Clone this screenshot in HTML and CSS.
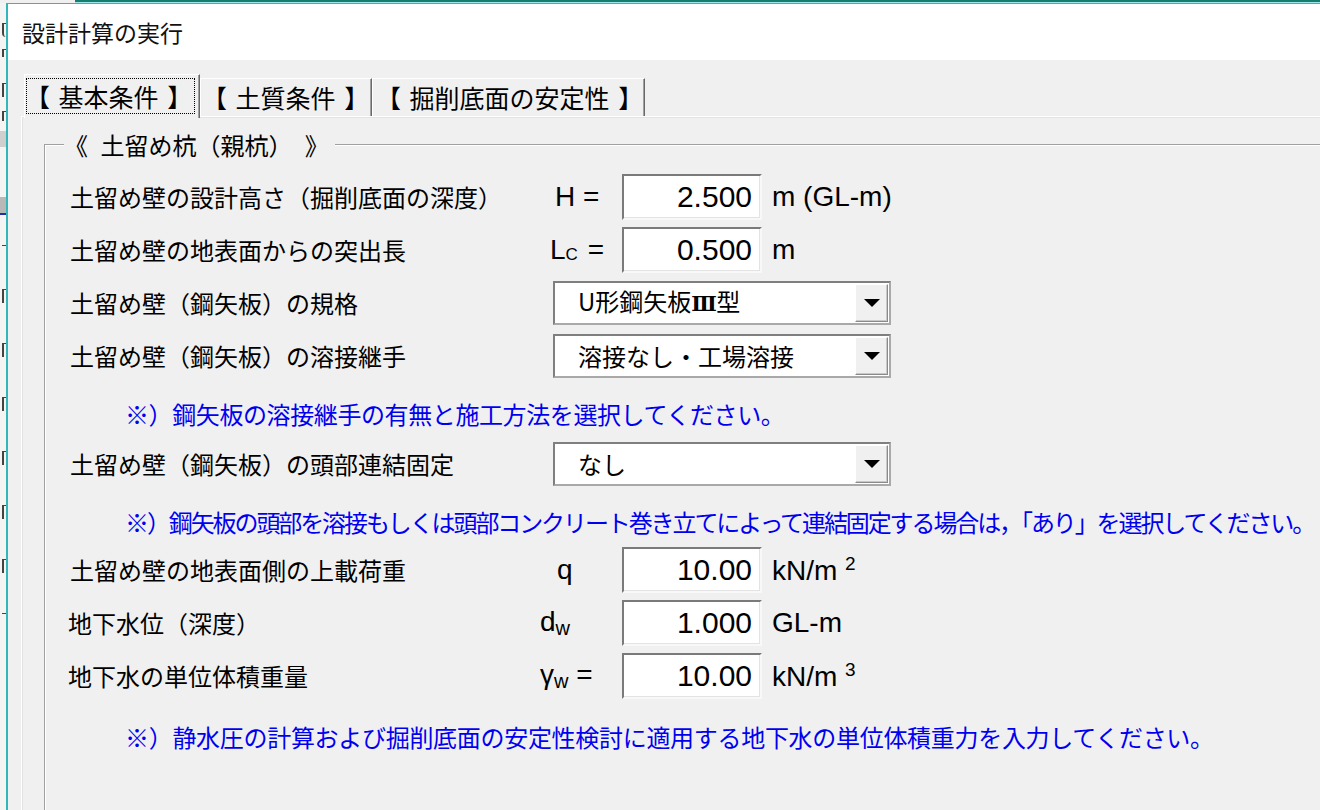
FILE: index.html
```html
<!DOCTYPE html>
<html lang="ja">

<head>
    <meta charset="UTF-8">
    <meta name="viewport" content="width=device-width, initial-scale=1.0">
    <title>設計計算の実行</title>
    <link rel="stylesheet" href="styles.css">
</head>

<body>
    <div class="topline"></div>

    <div class="desk">
        <!-- window lying behind the dialog, only a sliver of it shows -->
        <div class="behind">
            <div class="mark m1"></div>
            <div class="mark m2"></div>
            <div class="mark m3"></div>
            <div class="mark m4"></div>
            <div class="band"></div>
            <div class="band band-sel"></div>
            <div class="mark m5"></div>
            <div class="mark m6"></div>
            <div class="mark m6"></div>
            <div class="mark m6"></div>
            <div class="mark m6"></div>
            <div class="mark m6"></div>
            <div class="mark m6"></div>
            <div class="mark m7"></div>
        </div>

        <div class="window">
            <div class="titlebar">設計計算の実行</div>

            <div class="client">
                <div class="tabs">
                    <div class="tab tab-basic active"><span class="focus">【 基本条件 】</span></div>
                    <div class="tab tab-soil">【 土質条件 】</div>
                    <div class="tab tab-bottom">【 掘削底面の安定性 】</div>
                </div>

                <div class="panel">
                    <div class="group">
                        <div class="group-head"><span class="group-title">《 土留め杭（親杭） 》</span></div>

                        <div class="group-body">
                            <div class="row">
                                <span class="label">土留め壁の設計高さ（掘削底面の深度）</span>
                                <span class="sym sym-h">H =</span>
                                <span class="num">2.500</span>
                                <span class="unit">m (GL-m)</span>
                            </div>
                            <div class="row">
                                <span class="label">土留め壁の地表面からの突出長</span>
                                <span class="sym sym-l">L<sub>C</sub> =</span>
                                <span class="num">0.500</span>
                                <span class="unit">m</span>
                            </div>
                            <div class="row">
                                <span class="label">土留め壁（鋼矢板）の規格</span>
                                <div class="select">
                                    <span class="select-text">U形鋼矢板<span class="roman">Ⅲ</span>型</span>
                                    <span class="drop"></span>
                                </div>
                            </div>
                            <div class="row">
                                <span class="label">土留め壁（鋼矢板）の溶接継手</span>
                                <div class="select">
                                    <span class="select-text">溶接なし・工場溶接</span>
                                    <span class="drop"></span>
                                </div>
                            </div>
                            <div class="note note-first">※）鋼矢板の溶接継手の有無と施工方法を選択してください。</div>
                            <div class="row">
                                <span class="label">土留め壁（鋼矢板）の頭部連結固定</span>
                                <div class="select">
                                    <span class="select-text">なし</span>
                                    <span class="drop"></span>
                                </div>
                            </div>
                            <div class="note note-tight">※）鋼矢板の頭部を溶接もしくは頭部コンクリート巻き立てによって連結固定する場合は，「あり」を選択してください。</div>
                            <div class="row">
                                <span class="label">土留め壁の地表面側の上載荷重</span>
                                <span class="sym sym-q">q</span>
                                <span class="num">10.00</span>
                                <span class="unit">kN/m <sup>2</sup></span>
                            </div>
                            <div class="row">
                                <span class="label label-water">地下水位（深度）</span>
                                <span class="sym sym-d">d<sub>w</sub></span>
                                <span class="num">1.000</span>
                                <span class="unit">GL-m</span>
                            </div>
                            <div class="row">
                                <span class="label label-water">地下水の単位体積重量</span>
                                <span class="sym sym-g">γ<sub>w</sub> =</span>
                                <span class="num">10.00</span>
                                <span class="unit">kN/m <sup>3</sup></span>
                            </div>
                            <div class="note note-last">※）静水圧の計算および掘削底面の安定性検討に適用する地下水の単位体積重力を入力してください。</div>
                        </div>
                    </div>
                </div>
            </div>
        </div>
    </div>
</body>

</html>
```

FILE: styles.css
```css
* {
    box-sizing: border-box;
}

body {
    margin: 0;
    width: 1320px;
    height: 810px;
    overflow: hidden;
    background-color: #F0F0F0;
    color: #000;
    font-family: "Noto Sans CJK JP", sans-serif;
}

.topline {
    height: 3px;
    margin-left: 75px;
    background: linear-gradient(#167E6D 0 2px, #9FE5EC 2px 3px);
}

.desk {
    display: flex;
    height: 807px;
}

/* window behind the dialog */
.behind {
    width: 6px;
    overflow: hidden;
    background-color: #F4F4F4;
}

.mark {
    width: 4px;
    height: 14px;
    margin-left: 2px;
    border-left: 2px solid #444;
    border-top: 1px solid #444;
}

.m1 { margin-top: 20px; border-radius: 0 0 0 4px; }
.m2 { margin-top: 12px; height: 8px; }
.m3 { margin-top: 26px; }
.m4 { margin-top: 14px; height: 10px; }

.band {
    height: 16px;
    margin-top: 10px;
    background-color: #CFCFCF;
}

.band-sel {
    height: 18px;
    margin-top: 50px;
    border-bottom: 2px solid #2030A0;
    background-color: #B8B8B8;
}

.m5 { margin-top: 30px; height: 4px; border-left: none; }
.m6 { margin-top: 40px; }
.m7 { margin-top: 40px; height: 2px; border-left: none; }

/* dialog */
.window {
    flex: 1;
    display: flex;
    flex-direction: column;
    border-left: 2px solid #33B6BA;
    border-top: 1px solid #33B6BA;
    background-color: #F0F0F0;
}

.titlebar {
    height: 56px;
    padding-left: 14px;
    background-color: #fff;
    font-size: 23px;
    line-height: 56px;
    color: #111;
}

.client {
    flex: 1;
    display: flex;
    flex-direction: column;
}

/* tabs */
.tabs {
    display: flex;
    align-items: flex-end;
    height: 56px;
    padding: 14px 0 0 16px;
}

.tab {
    height: 38px;
    border-top: 1px solid #fff;
    border-left: 1px solid #fff;
    border-right: 1px solid #696969;
    box-shadow: inset -1px 0 0 #A0A0A0;
    background-color: #F0F0F0;
    font-size: 25px;
    line-height: 36px;
    word-spacing: 3px;
    white-space: nowrap;
}

.tab.active {
    position: relative;
    z-index: 1;
    height: 44px;
    margin-bottom: -2px;
    padding: 3px 4px 4px 1px;
    display: flex;
}

.focus {
    flex: 1;
    border: 1px dotted #000;
    line-height: 34px;
    text-indent: -2px;
}

.tab-basic { width: 176px; }
.tab-soil { width: 172px; padding-left: 1px; }
.tab-bottom { width: 273px; padding-left: 3px; }

.panel {
    flex: 1;
    margin-left: 13px;
    border-top: 1px solid #fff;
    border-left: 1px solid #fff;
    box-shadow: inset 1px 1px 0 #E3E3E3;
}

/* group box */
.group {
    margin: 12px 0 0 22px;
}

.group-head {
    display: flex;
    height: 32px;
}

.group-head::before,
.group-head::after {
    content: "";
    align-self: flex-end;
    height: 16px;
    border-top: 1px solid #A0A0A0;
}

.group-head::before {
    width: 19px;
    border-left: 1px solid #A0A0A0;
    box-shadow: inset 1px 1px 0 #fff;
}

.group-head::after {
    flex: 1;
    margin-left: 6px;
    box-shadow: inset 0 1px 0 #fff;
}

.group-title {
    font-size: 24px;
    line-height: 32px;
    word-spacing: 7px;
    white-space: nowrap;
}

.group-body {
    height: 649px;
    padding: 9px 0 0 25px;
    border-left: 1px solid #A0A0A0;
    box-shadow: inset 1px 0 0 #fff;
}

/* rows */
.row {
    display: grid;
    grid-template-columns: 470px 82px 140px auto;
    align-items: center;
    height: 53px;
}

.label {
    font-size: 24px;
    line-height: 32px;
    white-space: nowrap;
}

.label-water {
    margin-left: -2px;
}

.sym,
.unit,
.num {
    font-family: "Liberation Sans", Arial, sans-serif;
    white-space: nowrap;
}

.sym {
    font-size: 28px;
}

.sym sub {
    font-size: 20px;
    vertical-align: -4px;
}

.sym-h { padding-left: 15px; }
.sym-l { padding-left: 10px; }
.sym-q { padding-left: 17px; }

.sym-l sub {
    font-size: 17px;
    vertical-align: -1px;
    margin-right: 2px;
}

.num {
    height: 46px;
    padding-right: 8px;
    border: 2px solid;
    border-color: #7A7A7A #F8F8F8 #F8F8F8 #7A7A7A;
    box-shadow: inset -1px -1px 0 #E3E3E3;
    background-color: #fff;
    font-size: 30px;
    line-height: 42px;
    text-align: right;
}

.unit {
    margin-left: 10px;
    font-size: 28px;
}

.unit sup {
    font-size: 19px;
    vertical-align: 10px;
}

/* combo boxes */
.select {
    grid-column: 2 / 4;
    display: flex;
    align-items: center;
    width: 338px;
    height: 44px;
    margin-left: 13px;
    padding: 1px;
    border: 2px solid;
    border-color: #7F7F7F #A9A9A9 #A9A9A9 #7F7F7F;
    background-color: #fff;
}

.select-text {
    flex: 1;
    padding-left: 22px;
    font-size: 24px;
    line-height: 32px;
    white-space: nowrap;
}

.roman {
    display: inline-block;
    width: 25px;
    text-align: center;
    font-family: "DejaVu Serif", "Liberation Serif", serif;
    font-weight: bold;
    font-size: 21px;
}

.drop {
    display: flex;
    align-items: center;
    justify-content: center;
    width: 33px;
    height: 38px;
    border: 1px solid;
    border-color: #fff #8A8A8A #8A8A8A #fff;
    box-shadow: inset -1px -1px 0 #C8C8C8;
    background-color: #F0F0F0;
}

.drop::after {
    content: "";
    border-left: 8px solid transparent;
    border-right: 8px solid transparent;
    border-top: 8px solid #000;
}

/* blue notes */
.note {
    height: 55px;
    padding: 17px 0 0 55px;
    font-size: 24px;
    line-height: 30px;
    color: #0000F0;
    white-space: nowrap;
}

.note-first {
    letter-spacing: -0.4px;
}

.note-tight {
    height: 53px;
    letter-spacing: -2.1px;
}

.note-last {
    padding-top: 20px;
    letter-spacing: -0.3px;
}
```
